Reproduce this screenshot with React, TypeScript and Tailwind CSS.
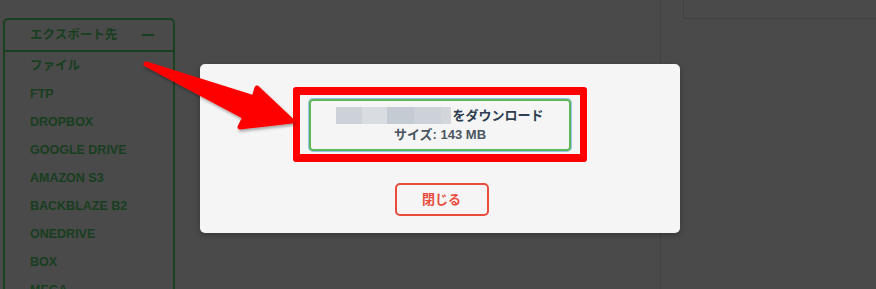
import React from "react";

const items = ["ファイル", "FTP", "DROPBOX", "GOOGLE DRIVE", "AMAZON S3", "BACKBLAZE B2", "ONEDRIVE", "BOX", "MEGA"];

export default function App() {
  return (
    <div
      className="relative w-[876px] h-[289px] overflow-hidden bg-[#4a4a4a] flex"
      style={{ fontFamily: '"Liberation Sans", "Noto Sans CJK JP", sans-serif' }}
    >
      {/* left panel */}
      <div className="pl-[3px] pt-[18px]">
        <div className="w-[172px] h-[300px] border-2 border-[#1a4022] rounded-[5px]">
          <div className="h-[32px] flex items-center pl-[25px] pr-[19px] justify-between border-b-2 border-[#1a4022]">
            <span className="text-[12.5px] font-bold text-[#183e20]">エクスポート先</span>
            <span className="w-[12px] h-[2px] bg-[#183e20]" />
          </div>
          <div className="flex flex-col">
            {items.map((t) => (
              <div key={t} className="h-[28px] flex items-center pl-[25px] text-[12.5px] font-bold text-[#183e20]">
                {t}
              </div>
            ))}
          </div>
        </div>
      </div>
      <div className="flex-1" />
      {/* right column */}
      <div className="w-[216px] border-l border-[#424242] pl-[22px]">
        <div className="h-[19px] border-l border-b border-[#414141] rounded-bl-[3px]" />
      </div>

      {/* modal */}
      <div className="absolute left-[200px] top-[64px] w-[480px] h-[169px] bg-[#f5f5f5] rounded-[5px] shadow-[0_2px_6px_rgba(0,0,0,0.25)] flex flex-col items-center pt-[23px]">
        <div className="w-[294px] h-[75px] border-x-[7px] border-y-[8px] border-[#ff0000] rounded-[3px] flex justify-center pt-[4px]">
          <div className="w-[262px] h-[52px] border-2 border-[#5cb85c] rounded-[4px] shadow-[0_0_0_1px_#9cc0e8] flex flex-col items-center pt-[5px]">
            <div className="flex items-center h-[19px] text-[13px] font-bold text-[#2c3e50]">
              <span className="flex h-[17px] mr-[1px]">
                <span className="w-[26px] bg-[#ccd2d8]" />
                <span className="w-[25px] bg-[#d9dde2]" />
                <span className="w-[27px] bg-[#c5cbd2]" />
                <span className="w-[27px] bg-[#cdd2d9]" />
                <span className="w-[10px] bg-[#d3d7dc]" />
              </span>
              をダウンロード
            </div>
            <div className="h-[19px] flex items-center text-[13px] font-bold text-[#4b5560]">サイズ: 143 MB</div>
          </div>
        </div>
        <button className="mt-[21px] w-[94px] h-[33px] border-2 border-[#e74c3c] rounded-[5px] text-[13px] font-bold text-[#e74c3c] flex items-center justify-center ml-[3px]">
          閉じる
        </button>
      </div>

      {/* annotation arrow */}
      <svg className="absolute left-0 top-0 pointer-events-none" width="876" height="289" viewBox="0 0 876 289">
        <defs>
          <filter id="sh" x="-20%" y="-20%" width="140%" height="140%">
            <feDropShadow dx="1" dy="2" stdDeviation="1.5" floodColor="#000" floodOpacity="0.35" />
          </filter>
        </defs>
        <polygon
          points="146,64 254,98 257,88 292,121 240,127 245,117"
          fill="#ff0000"
          stroke="#ff0000"
          strokeWidth="5"
          strokeLinejoin="round"
          filter="url(#sh)"
        />
      </svg>
    </div>
  );
}
